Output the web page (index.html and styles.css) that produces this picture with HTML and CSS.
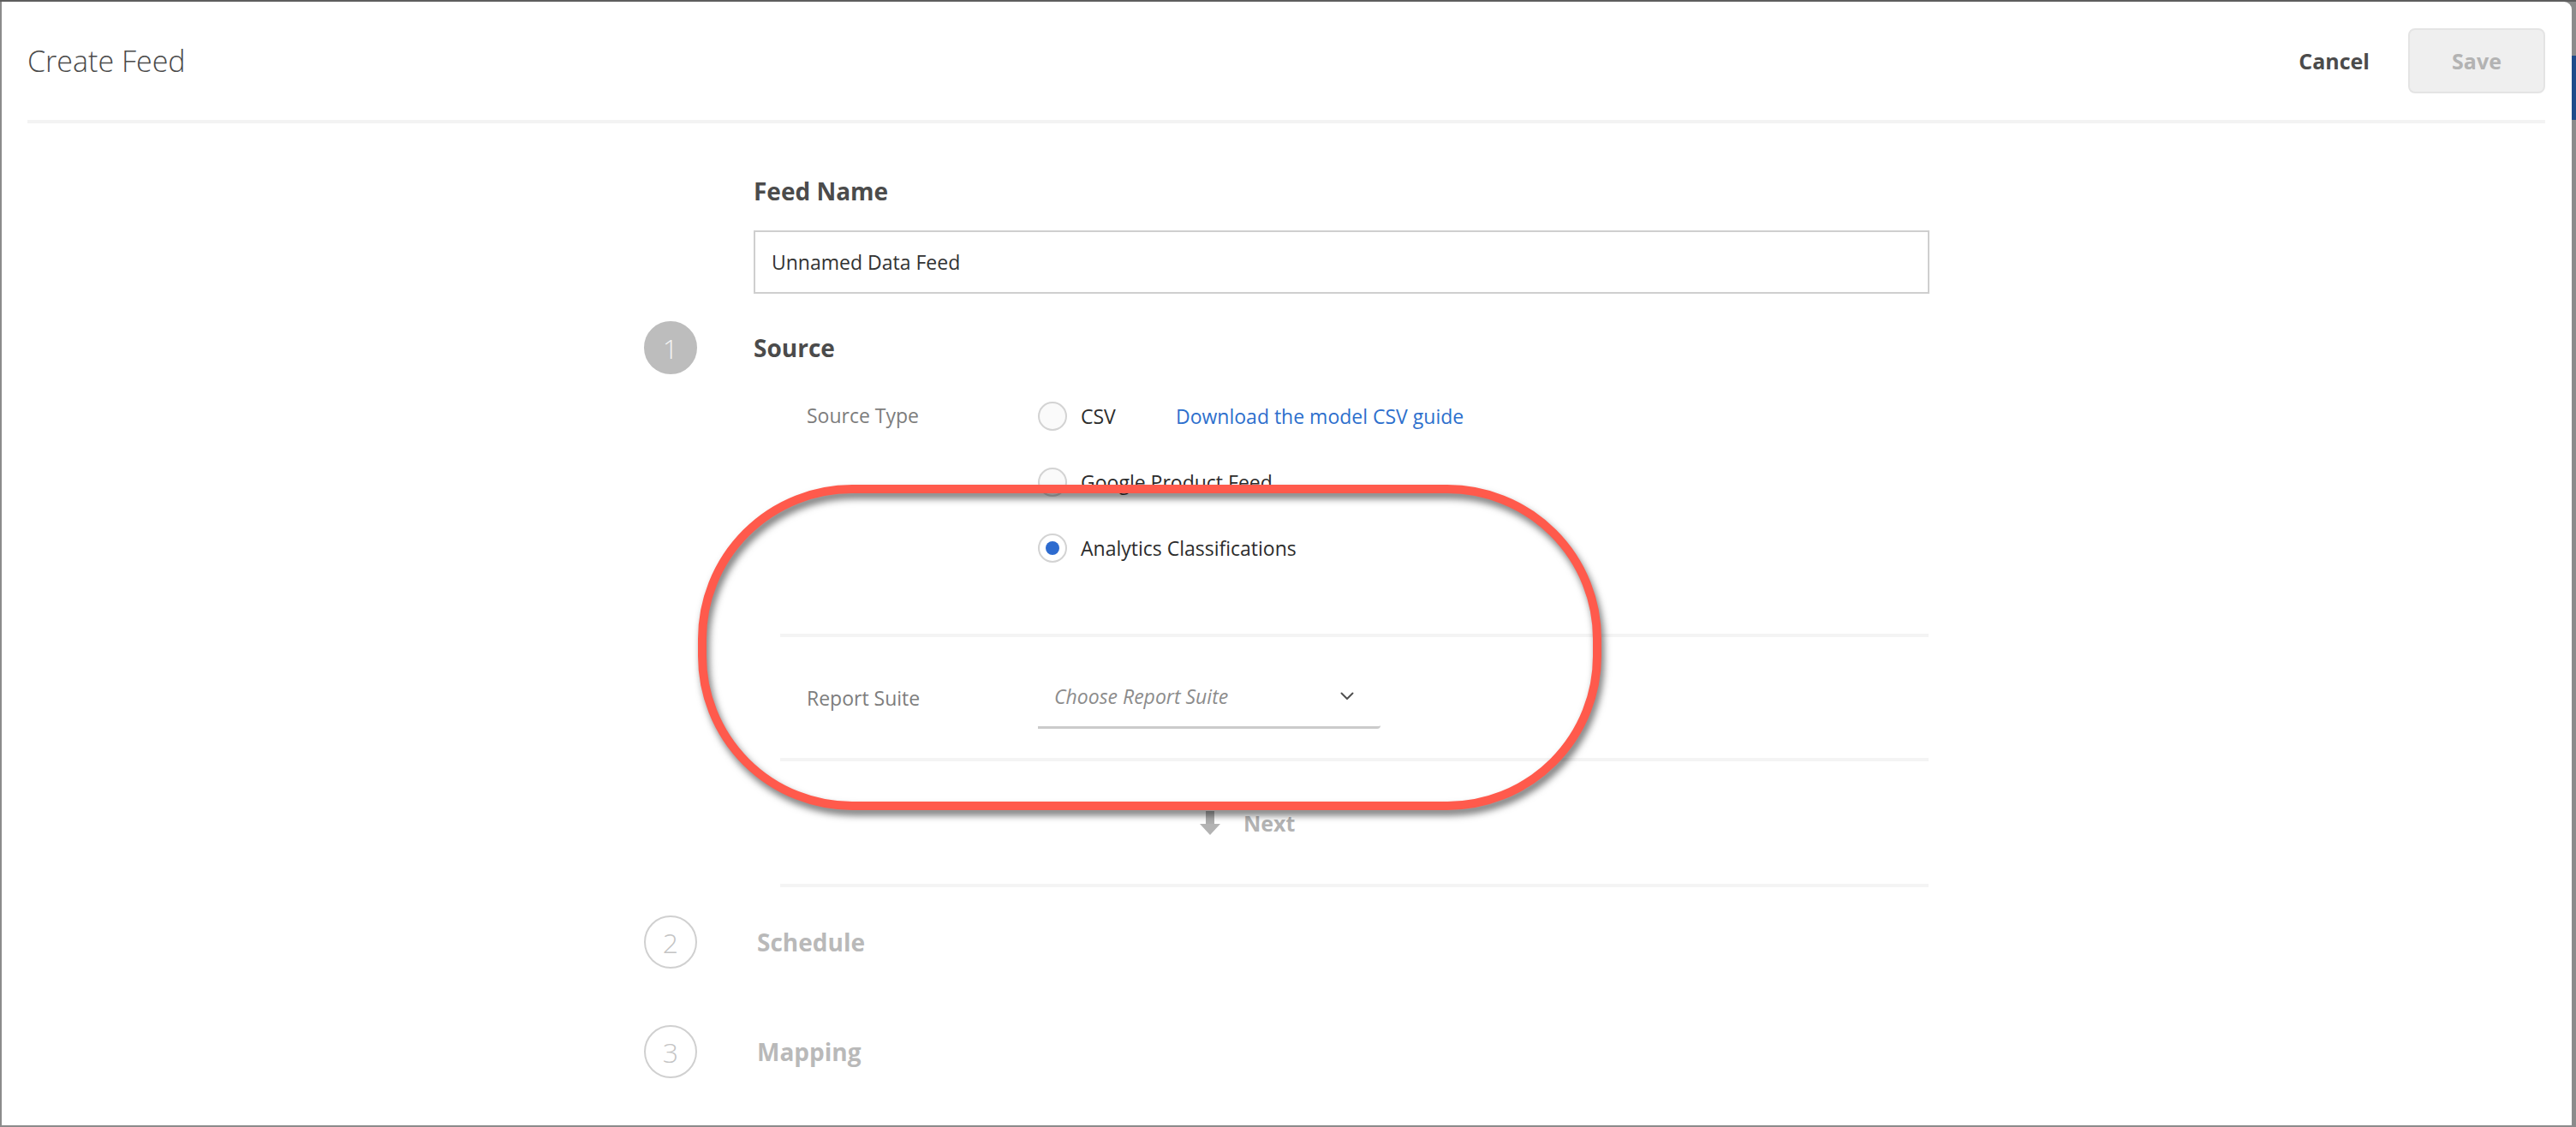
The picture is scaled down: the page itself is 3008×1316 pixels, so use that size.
FILE: index.html
```html
<!DOCTYPE html>
<html lang="en">
<head>
<meta charset="utf-8">
<title>Create Feed</title>
<link rel="stylesheet" href="styles.css">
</head>
<body>
<div class="window">
  <header class="topbar">
    <h1 class="title">Create Feed</h1>
    <div class="actions">
      <button class="btn-cancel" type="button">Cancel</button>
      <button class="btn-save" type="button" disabled>Save</button>
    </div>
  </header>

  <main class="form">
    <h2 class="field-title">Feed Name</h2>
    <div class="name-input">Unnamed Data Feed</div>

    <div class="step step-first">
      <div class="step-num active">1</div>
      <h2 class="step-title">Source</h2>
    </div>

    <div class="sub">
      <div class="source-row">
        <div class="label">Source Type</div>
        <div class="options">
          <div class="radio-row">
            <span class="radio"></span>
            <span class="opt-text csv">CSV</span>
            <a class="link" href="#">Download the model CSV guide</a>
          </div>
          <div class="radio-row">
            <span class="radio"></span>
            <span class="opt-text">Google Product Feed</span>
          </div>
          <div class="radio-row">
            <span class="radio checked"></span>
            <span class="opt-text">Analytics Classifications</span>
          </div>
        </div>
      </div>

      <div class="report-row">
        <div class="label">Report Suite</div>
        <div class="select">
          <span>Choose Report Suite</span>
          <svg class="chev" width="16" height="10" viewBox="0 0 16 10"><polyline points="1.5,1.5 8,8 14.5,1.5" fill="none" stroke="#505050" stroke-width="2" stroke-linecap="round" stroke-linejoin="round"/></svg>
        </div>
      </div>

      <div class="next-row">
        <svg class="next-arrow" width="24" height="28" viewBox="0 0 24 28"><rect x="7" y="0" width="10" height="16" fill="#aeaeae"/><polygon points="0,15 24,15 12,28" fill="#b3b3b3"/></svg>
        <span class="next-text">Next</span>
      </div>
    </div>

    <div class="step step-second">
      <div class="step-num">2</div>
      <h2 class="step-title muted">Schedule</h2>
    </div>
    <div class="step step-third">
      <div class="step-num">3</div>
      <h2 class="step-title muted">Mapping</h2>
    </div>
  </main>

  <div class="annotation"></div>
</div>
<div class="frame-edge"><div class="frame-tab"></div></div>
</body>
</html>
```

FILE: styles.css
```css
* { box-sizing: border-box; }

html, body {
  margin: 0;
  height: 100%;
}

body {
  display: flex;
  background: #8b8b8b;
  border-top: 2px solid #5e5e5e;
  font-family: "Open Sans", "Noto Sans", "Liberation Sans", sans-serif;
  color: #4b4b4b;
  overflow: hidden;
}

.window {
  flex: 1;
  margin: 0 0 2px 2px;
  background: #ffffff;
  border-top-right-radius: 9px;
  position: relative;
  overflow: hidden;
}

.frame-edge {
  width: 5px;
  flex: none;
  padding-top: 63px;
}

.frame-tab {
  height: 75px;
  background: #1f4b8a;
}

/* Header */
.topbar {
  display: flex;
  align-items: center;
  justify-content: space-between;
  height: 142px;
  margin: 0 31px 0 30px;
  border-bottom: 4px solid #f3f3f3;
}

.title {
  margin: 0;
  font-size: 34px;
  font-weight: 300;
  line-height: 40px;
  color: #4a4a4a;
}

.actions {
  display: flex;
  align-items: center;
  gap: 45px;
}

.btn-cancel {
  border: none;
  background: none;
  padding: 0;
  font-family: inherit;
  font-size: 25px;
  font-weight: 700;
  color: #4b4b4b;
}

.btn-save {
  width: 160px;
  height: 76px;
  border: 2px solid #e4e4e4;
  border-radius: 8px;
  background: #efefef;
  font-family: inherit;
  font-size: 25px;
  font-weight: 700;
  color: #b3b3b3;
}

/* Form */
.form {
  padding: 61px 0 0 750px;
  width: 2251px;
}

.field-title {
  margin: 0 0 28px 128px;
  font-size: 28px;
  font-weight: 700;
  line-height: 36px;
  color: #4b4b4b;
}

.name-input {
  margin-left: 128px;
  width: 1373px;
  height: 74px;
  border: 2px solid #cfcfcf;
  padding: 0 19px;
  display: flex;
  align-items: center;
  font-size: 23px;
  color: #323232;
}

.step {
  display: grid;
  grid-template-columns: 128px 1fr;
  align-items: center;
}

.step-first { margin-top: 32px; }
.step-second { margin-top: 33px; }
.step-third { margin-top: 66px; }

.step-num {
  width: 62px;
  height: 62px;
  border-radius: 50%;
  border: 2px solid #d0d0d0;
  display: flex;
  align-items: center;
  justify-content: center;
  font-size: 32px;
  font-weight: 300;
  color: #c4c4c4;
}

.step-num.active {
  background: #bdbdbd;
  border-color: #bdbdbd;
  color: #f4f4f4;
}

.step-title {
  margin: 0;
  font-size: 28px;
  font-weight: 700;
  line-height: 36px;
  color: #4b4b4b;
}

.step-title.muted {
  color: #b9b9b9;
  padding-left: 4px;
}

/* Source sub section */
.sub {
  margin-left: 159px;
  width: 1341px;
  margin-top: 10px;
}

.label {
  font-size: 23px;
  color: #7d7d7d;
}

.source-row {
  display: grid;
  grid-template-columns: 270px 1fr;
  padding-left: 31px;
  margin-bottom: 62px;
}

.source-row .label {
  line-height: 77px;
}

.radio-row {
  display: flex;
  align-items: center;
  gap: 16px;
  height: 77px;
  font-size: 23px;
  color: #2c2c2c;
}

.radio {
  width: 34px;
  height: 34px;
  flex: none;
  border-radius: 50%;
  border: 2px solid #d3d3d3;
  background: #fafafa;
  display: flex;
  align-items: center;
  justify-content: center;
}

.radio.checked { background: #ffffff; }

.radio.checked::after {
  content: "";
  width: 16px;
  height: 16px;
  border-radius: 50%;
  background: #2d6bcf;
}

.opt-text.csv { min-width: 95px; }

.link {
  color: #2d6fcd;
  text-decoration: none;
}

.report-row {
  display: grid;
  grid-template-columns: 270px 400px;
  align-items: center;
  height: 145px;
  padding-left: 31px;
  border-top: 4px solid #f4f4f4;
}

.select {
  display: flex;
  align-items: center;
  justify-content: space-between;
  width: 400px;
  height: 72px;
  padding: 0 31px 0 19px;
  border-bottom: 3px solid #cbcbcb;
  border-bottom-right-radius: 4px;
  font-size: 23px;
  font-style: italic;
  color: #8c8c8c;
}

.next-row {
  display: flex;
  align-items: center;
  gap: 27px;
  height: 151px;
  padding-left: 490px;
  border-top: 4px solid #f4f4f4;
  border-bottom: 4px solid #f4f4f4;
}

.next-text {
  font-size: 25px;
  font-weight: 700;
  color: #b3b3b3;
}

/* Red callout drawn over the screenshot */
.annotation {
  position: absolute;
  left: 813px;
  top: 564px;
  width: 1055px;
  height: 380px;
  border: 10px solid #ff5a4c;
  border-radius: 180px;
  filter: drop-shadow(3px 6px 4px rgba(0, 0, 0, 0.55));
  pointer-events: none;
}
```
